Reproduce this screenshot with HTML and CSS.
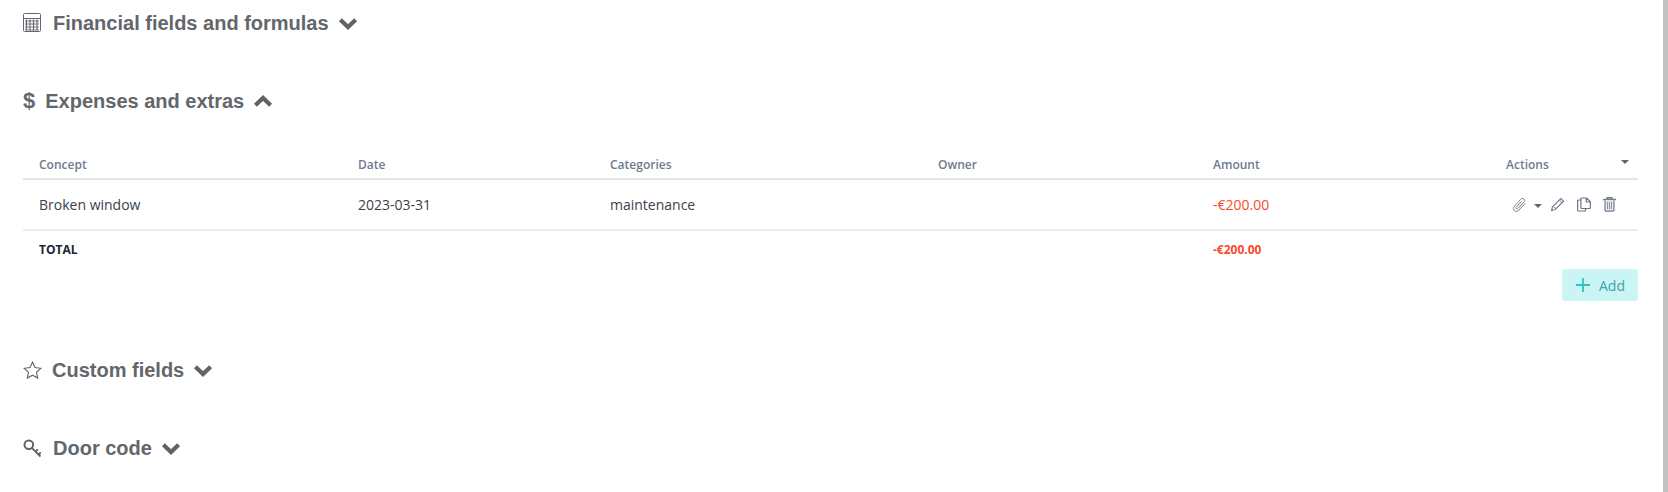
FILE: index.html
```html
<!DOCTYPE html>
<html lang="en">
<head>
<meta charset="UTF-8">
<title>Expenses and extras</title>
<link rel="stylesheet" href="styles.css">
</head>
<body>

<div class="page">
  <section class="section section-financial">
    <h2 class="section-title">
      <svg class="title-icon" width="19" height="20" viewBox="0 0 19 20">
        <rect x="0.500" y="0.500" width="17" height="18" rx="1" fill="none" stroke="#666a70"/>
        <path d="M0.500 5.500h17" stroke="#666a70" fill="none"/>
        <path d="M2 8h14M2 11h14M2 14h14M2 17h14" stroke="#7d8186" stroke-width="1" fill="none"/>
        <path d="M3.500 6.500v11M7 6.500v11M10.500 6.500v11M14 6.500v11" stroke="#666a70" stroke-width="1.200" fill="none"/>
      </svg>
      <span>Financial fields and formulas</span>
      <svg class="chevron" width="20" height="13" viewBox="0 0 20 13"><path d="M2.400 2.800L10 10l7.600-7.200" fill="none" stroke="#5f6368" stroke-width="4.200"/></svg>
    </h2>
  </section>

  <section class="section section-expenses">
    <h2 class="section-title">
      <span class="dollar">$</span>
      <span>Expenses and extras</span>
      <svg class="chevron" width="20" height="13" viewBox="0 0 20 13"><path d="M2.400 10.200L10 3l7.600 7.200" fill="none" stroke="#5f6368" stroke-width="4.200"/></svg>
    </h2>

    <table class="expenses">
      <colgroup>
        <col class="col-concept"><col class="col-date"><col class="col-categories">
        <col class="col-owner"><col class="col-amount"><col class="col-actions">
      </colgroup>
      <thead>
        <tr>
          <th>Concept</th>
          <th>Date</th>
          <th>Categories</th>
          <th>Owner</th>
          <th>Amount</th>
          <th class="th-actions">Actions<span class="caret caret-head"></span></th>
        </tr>
      </thead>
      <tbody>
        <tr>
          <td>Broken window</td>
          <td>2023-03-31</td>
          <td>maintenance</td>
          <td></td>
          <td class="negative">-€200.00</td>
          <td>
            <div class="actions">
              <svg width="15" height="16" viewBox="0 0 15 16"><path d="M13 6.500L6.800 13.200C5.500 14.600 3.500 14.800 2.300 13.700C1 12.500 1.100 10.600 2.400 9.200L8.800 2.300C9.700 1.300 11.100 1.100 12 2C12.900 2.800 12.800 4.200 11.900 5.100L6 11.400C5.500 12 4.700 12.100 4.300 11.700C3.800 11.200 3.900 10.500 4.500 9.900L9.500 4.500" fill="none" stroke="#757d8f" stroke-width="1"/></svg>
              <span class="caret caret-row"></span>
              <svg class="icon-pencil" width="15" height="15" viewBox="0 0 15 15"><path d="M10.800 1.500l2.700 2.700-8.300 8.300-3.600 1 .9-3.700z" fill="none" stroke="#757d8f" stroke-width="1.200"/><path d="M2.600 12.400l-.9 1.300 1.300-.4z" fill="#757d8f"/><path d="M4 9.800l2.200 2.200M9.300 3l2.700 2.700" stroke="#757d8f" fill="none"/></svg>
              <svg class="icon-copy" width="14" height="15" viewBox="0 0 14 15"><path d="M4 3H1.600a1 1 0 0 0-1 1v9a1 1 0 0 0 1 1h6a1 1 0 0 0 1-1v-1.500" fill="none" stroke="#6b7387" stroke-width="1.200"/><path d="M4.600 1h5l3.800 3.800v6a.7.7 0 0 1-.7.7H4.600a.7.7 0 0 1-.7-.7V1.700a.7.7 0 0 1 .7-.7zM9.300 1v4h4" fill="none" stroke="#6b7387" stroke-width="1.200"/></svg>
              <svg class="icon-trash" width="13" height="15" viewBox="0 0 13 15"><path d="M0 2.500h13M4 2V.8h5V2" fill="none" stroke="#757d8f" stroke-width="1.400"/><path d="M2 3.500v9.700a1 1 0 0 0 1 1h7a1 1 0 0 0 1-1V3.500" fill="#e3e5ea" stroke="#757d8f" stroke-width="1.200"/><path d="M4.500 5v7M6.500 5v7M8.500 5v7" stroke="#8f96a6" fill="none"/></svg>
            </div>
          </td>
        </tr>
      </tbody>
      <tfoot>
        <tr>
          <td>TOTAL</td>
          <td></td>
          <td></td>
          <td></td>
          <td class="negative">-€200.00</td>
          <td></td>
        </tr>
      </tfoot>
    </table>

    <div class="table-footer">
      <button class="btn-add">
        <svg width="14" height="14" viewBox="0 0 14 14"><path d="M7 0v14M0 7h14" stroke="#2cc4c4" stroke-width="1.800" fill="none"/></svg>
        <span>Add</span>
      </button>
    </div>
  </section>

  <section class="section section-custom">
    <h2 class="section-title">
      <svg class="title-icon icon-star" width="19" height="18" viewBox="0 0 19 18"><path d="M9.500 1.200l2.500 5.400 5.800.7-4.300 4 1.200 5.800-5.200-2.900-5.200 2.900 1.200-5.800-4.300-4 5.800-.7z" fill="none" stroke="#5f6368" stroke-width="1.100"/></svg>
      <span>Custom fields</span>
      <svg class="chevron" width="20" height="13" viewBox="0 0 20 13"><path d="M2.400 2.800L10 10l7.600-7.200" fill="none" stroke="#5f6368" stroke-width="4.200"/></svg>
    </h2>
  </section>

  <section class="section section-door">
    <h2 class="section-title">
      <svg class="title-icon" width="19" height="19" viewBox="0 0 19 19"><circle cx="5.800" cy="5.800" r="4.300" fill="none" stroke="#5f6368" stroke-width="2"/><path d="M8.800 8.800l8.700 8.700M12.500 12.500l2.400-2.200M15.500 15.500l2.300-2" fill="none" stroke="#5f6368" stroke-width="1.800"/></svg>
      <span>Door code</span>
      <svg class="chevron" width="20" height="13" viewBox="0 0 20 13"><path d="M2.400 2.800L10 10l7.600-7.200" fill="none" stroke="#5f6368" stroke-width="4.200"/></svg>
    </h2>
  </section>
</div>

<div class="scrollbar"></div>

</body>
</html>
```

FILE: styles.css
```css
html, body {
  margin: 0;
  padding: 0;
  height: 100%;
  overflow: hidden;
  background: #fff;
  font-family: 'Open Sans', sans-serif;
}

.page {
  padding: 0 30px 0 23px;
}

.section-title {
  margin: 0;
  display: flex;
  align-items: center;
  height: 24px;
  font-family: 'Liberation Sans', Arial, sans-serif;
  font-size: 20px;
  font-weight: bold;
  color: #63666b;
}

.section-financial { padding-top: 11px; }
.section-expenses { padding-top: 54px; }
.section-custom { padding-top: 57px; }
.section-door { padding-top: 54px; }

.title-icon { flex: none; margin-right: 11px; }
.icon-star { margin-right: 10px; }
.chevron { flex: none; margin-left: 9px; }

.dollar {
  font-family: 'Liberation Sans', Arial, sans-serif;
  font-weight: bold;
  font-size: 22px;
  margin-right: 10px;
}

.expenses {
  width: 100%;
  margin-top: 38px;
  border-collapse: collapse;
  table-layout: fixed;
}

.col-concept { width: 319px; }
.col-date { width: 252px; }
.col-categories { width: 328px; }
.col-owner { width: 275px; }
.col-amount { width: 293px; }

.expenses th, .expenses td {
  padding: 0 0 0 16px;
  text-align: left;
  white-space: nowrap;
}

.expenses th {
  height: 27px;
  font-size: 12px;
  font-weight: 600;
  color: #707a8f;
  border-bottom: 2px solid #e4e4ea;
}

.th-actions { position: relative; }

.expenses tbody td {
  height: 49px;
  font-size: 14px;
  color: #3a3f4b;
  border-bottom: 2px solid #ecebf6;
}

.expenses tfoot td {
  height: 37px;
  font-size: 12px;
  font-weight: 700;
  color: #20242e;
}

.expenses td.negative {
  color: #fa4a2c;
}

.caret {
  display: inline-block;
  border-left: 4px solid transparent;
  border-right: 4px solid transparent;
  border-top: 4px solid #5d6478;
}

.caret-head {
  position: absolute;
  right: 9px;
  top: 9px;
}

.actions {
  display: flex;
  align-items: center;
  margin-left: 6px;
}

.caret-row { margin: 2px 0 0 7px; }
.icon-pencil { margin-left: 8px; }
.icon-copy { margin-left: 12px; }
.icon-trash { margin-left: 12px; }

.table-footer {
  display: flex;
  justify-content: flex-end;
}

.btn-add {
  display: flex;
  align-items: center;
  gap: 9px;
  width: 76px;
  height: 32px;
  padding: 0 0 0 14px;
  margin-top: 1px;
  border: 0;
  border-radius: 3px;
  background: #cbf5f5;
  font-family: 'Open Sans', sans-serif;
  font-size: 14px;
  color: #3ba3a8;
}

.scrollbar {
  position: fixed;
  top: 0;
  right: 0;
  bottom: 0;
  width: 5px;
  background: #c1c1c1;
}
```
